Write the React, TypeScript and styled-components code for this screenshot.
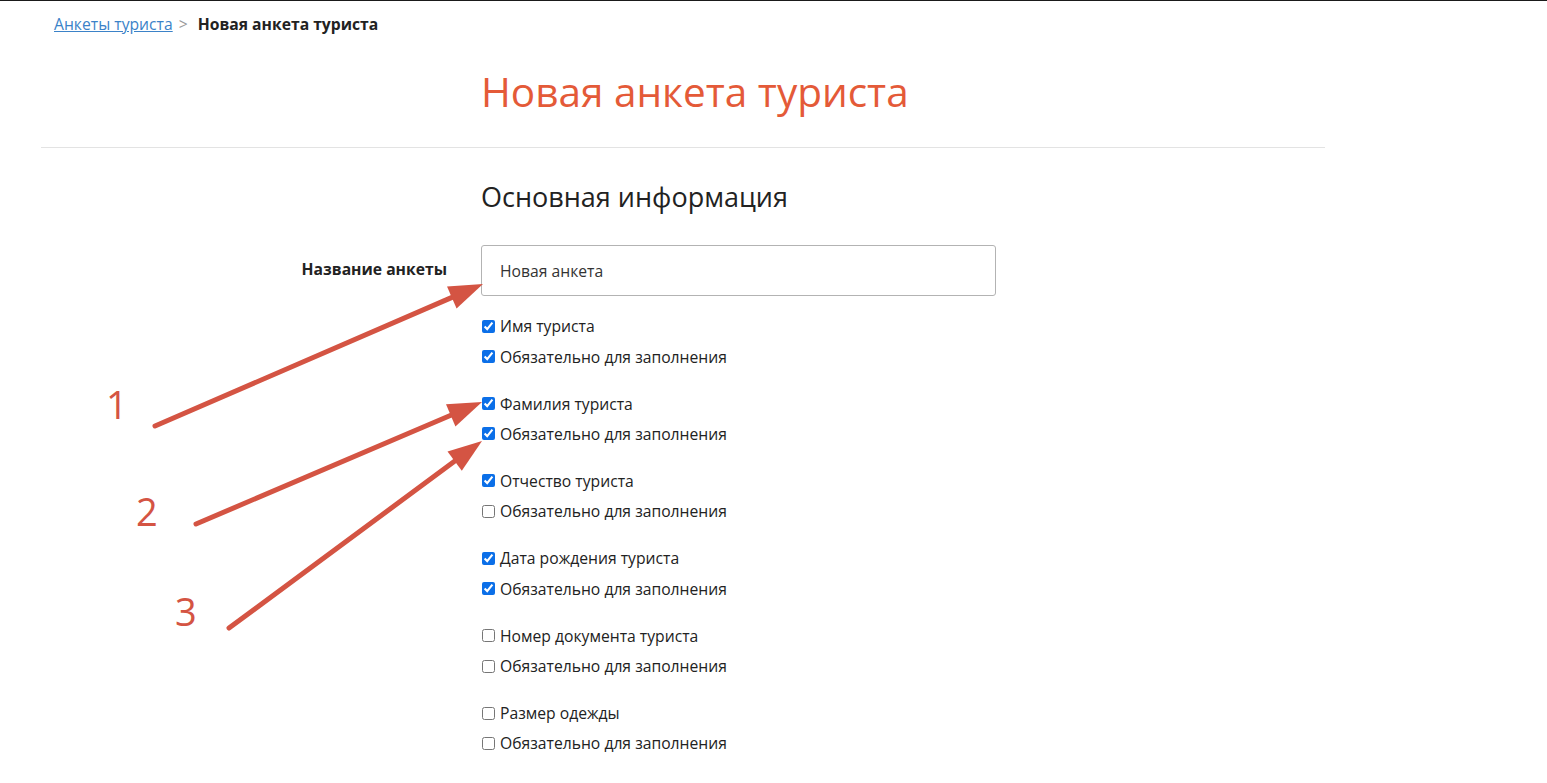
import React from "react";
import styled, { createGlobalStyle } from "styled-components";

const Global = createGlobalStyle`
  html, body { margin: 0; padding: 0; background: #fff; }
  body {
    font-family: "Open Sans", "Noto Sans", sans-serif;
    color: #212529;
    border-top: 1px solid #1a1a1a;
  }
`;

const Page = styled.div`
  position: relative;
  min-height: 782px;
`;

const Breadcrumbs = styled.nav`
  display: flex;
  align-items: center;
  gap: 6px;
  padding: 13px 0 0 54px;
  font-size: 15.7px;
  line-height: 20px;
`;

const Crumb = styled.a`
  color: #3b82c8;
  text-decoration: underline;
`;

const Sep = styled.span`
  color: #9a9a9a;
  margin-right: 4px;
`;

const Current = styled.span`
  font-weight: 700;
  color: #222;
`;

const Container = styled.div`
  margin-left: 41px;
  width: 1284px;
`;

const Offset = styled.div`
  padding-left: 440px;
`;

const Title = styled.h1`
  margin: 34px 0 0 0;
  font-size: 40.5px;
  line-height: 48px;
  font-weight: 400;
  color: #e45a38;
`;

const Rule = styled.hr`
  margin: 31px 0 0 0;
  border: 0;
  border-top: 1px solid #e3e3e3;
`;

const Heading = styled.h2`
  margin: 33px 0 0 0;
  font-size: 27px;
  line-height: 32px;
  font-weight: 400;
  color: #222;
`;

const FormRow = styled.div`
  display: grid;
  grid-template-columns: 440px 515px;
  margin-top: 32px;
  align-items: center;
`;

const Label = styled.label`
  text-align: right;
  padding-right: 34px;
  font-size: 15.7px;
  font-weight: 700;
  color: #222;
  margin-top: -4px;
`;

const Input = styled.input`
  box-sizing: border-box;
  height: 51px;
  width: 515px;
  border: 1px solid #b3b3b3;
  border-radius: 3px;
  padding: 0 18px;
  font-family: "Open Sans", sans-serif;
  font-size: 15.7px;
  color: #333;
  outline: none;
`;

const Groups = styled.div`
  display: flex;
  flex-direction: column;
  gap: 16.6px;
  margin-top: 15px;
`;

const Group = styled.div`
  display: flex;
  flex-direction: column;
`;

const CheckRow = styled.label`
  display: flex;
  align-items: center;
  height: 30.4px;
  font-size: 15.7px;
  color: #222;
`;

const Box = styled.input`
  width: 13px;
  height: 13px;
  margin: 0 5px 0 1px;
  accent-color: #0b6fe8;
`;

const Overlay = styled.svg`
  position: absolute;
  left: 0;
  top: 0;
  pointer-events: none;
`;

const Num = styled.text`
  font-family: "Open Sans", sans-serif;
  font-size: 38px;
  fill: #d45443;
`;

const fields: { name: string; on: boolean; req: boolean }[] = [
  { name: "Имя туриста", on: true, req: true },
  { name: "Фамилия туриста", on: true, req: true },
  { name: "Отчество туриста", on: true, req: false },
  { name: "Дата рождения туриста", on: true, req: true },
  { name: "Номер документа туриста", on: false, req: false },
  { name: "Размер одежды", on: false, req: false },
];

const arrows = [
  { x1: 155, y1: 425, x2: 483, y2: 283 },
  { x1: 196, y1: 523, x2: 482, y2: 401 },
  { x1: 229, y1: 627, x2: 482, y2: 440 },
];

function Arrow({ x1, y1, x2, y2 }: { x1: number; y1: number; x2: number; y2: number }) {
  const dx = x2 - x1;
  const dy = y2 - y1;
  const len = Math.hypot(dx, dy);
  const ux = dx / len;
  const uy = dy / len;
  const head = 34;
  const half = 12;
  const bx = x2 - ux * head;
  const by = y2 - uy * head;
  const px = -uy;
  const py = ux;
  const pts = `${x2},${y2} ${bx + px * half},${by + py * half} ${bx - px * half},${by - py * half}`;
  return (
    <g>
      <line x1={x1} y1={y1} x2={bx + ux * 4} y2={by + uy * 4} stroke="#d45443" strokeWidth={5} strokeLinecap="round" />
      <polygon points={pts} fill="#d45443" />
    </g>
  );
}

export default function App() {
  return (
    <Page>
      <Global />
      <Breadcrumbs>
        <Crumb href="#">Анкеты туриста</Crumb>
        <Sep>&gt;</Sep>
        <Current>Новая анкета туриста</Current>
      </Breadcrumbs>
      <Container>
        <Offset>
          <Title>Новая анкета туриста</Title>
        </Offset>
        <Rule />
        <Offset>
          <Heading>Основная информация</Heading>
        </Offset>
        <FormRow>
          <Label>Название анкеты</Label>
          <Input defaultValue="Новая анкета" />
        </FormRow>
        <Offset>
          <Groups>
            {fields.map((f) => (
              <Group key={f.name}>
                <CheckRow>
                  <Box type="checkbox" defaultChecked={f.on} />
                  {f.name}
                </CheckRow>
                <CheckRow>
                  <Box type="checkbox" defaultChecked={f.req} />
                  Обязательно для заполнения
                </CheckRow>
              </Group>
            ))}
          </Groups>
        </Offset>
      </Container>
      <Overlay width={1547} height={783}>
        {arrows.map((a, i) => (
          <Arrow key={i} {...a} />
        ))}
        <Num x={106} y={418}>1</Num>
        <Num x={136} y={525}>2</Num>
        <Num x={175} y={625}>3</Num>
      </Overlay>
    </Page>
  );
}
